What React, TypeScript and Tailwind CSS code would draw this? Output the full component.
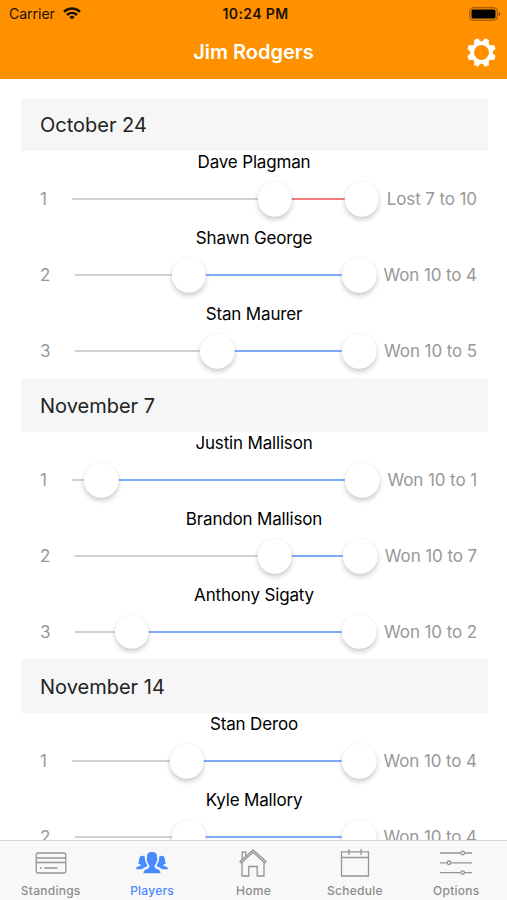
interface Match {
  opponent: string;
  score: number;
  result: string;
  lost?: boolean;
  slot: string;
}

interface Round {
  date: string;
  matches: Match[];
}

const rounds: Round[] = [
  {
    date: "October 24",
    matches: [
      { opponent: "Dave Plagman", score: 7, result: "Lost 7 to 10", lost: true, slot: "w-[115.5px]" },
      { opponent: "Shawn George", score: 4, result: "Won 10 to 4", slot: "w-[118px]" },
      { opponent: "Stan Maurer", score: 5, result: "Won 10 to 5", slot: "w-[118px]" },
    ],
  },
  {
    date: "November 7",
    matches: [
      { opponent: "Justin Mallison", score: 1, result: "Won 10 to 1", slot: "w-[115px]" },
      { opponent: "Brandon Mallison", score: 7, result: "Won 10 to 7", slot: "w-[117px]" },
      { opponent: "Anthony Sigaty", score: 2, result: "Won 10 to 2", slot: "w-[118px]" },
    ],
  },
  {
    date: "November 14",
    matches: [
      { opponent: "Stan Deroo", score: 4, result: "Won 10 to 4", slot: "w-[118px]" },
      { opponent: "Kyle Mallory", score: 4, result: "Won 10 to 4", slot: "w-[118px]" },
    ],
  },
];

function WifiIcon() {
  return (
    <svg className="ml-[8px] h-[13px] w-[18px]" viewBox="0 0 18 13" fill="none" stroke="#1c1000" strokeWidth="2.5">
      <path d="M1 4.8C5.5.5 12.5.5 17 4.8" />
      <path d="M4 8C7 5.2 11 5.2 14 8" />
      <path d="M9 12.6 6.4 9.9Q9 7.8 11.6 9.9Z" fill="#1c1000" stroke="none" />
    </svg>
  );
}

function BatteryIcon() {
  return (
    <svg className="h-[14px] w-[32px]" viewBox="0 0 32 14">
      <rect x="0.8" y="0.8" width="27.4" height="12.4" rx="3" fill="none" stroke="#8a4e00" strokeWidth="1" />
      <rect x="2.5" y="2.5" width="24" height="9" rx="1.5" fill="#000" />
      <path d="M29.7 4.8q1.600.8 1.600 2.200t-1.600 2.200z" fill="#8a4e00" />
    </svg>
  );
}

const teeth = [22.5, 67.5, 112.5, 157.5, 202.5, 247.5, 292.5, 337.5];

function GearIcon() {
  return (
    <svg className="h-[29px] w-[29px]" viewBox="-15 -15 30 30">
      <circle r="9.6" fill="none" stroke="#fff" strokeWidth="3.8" />
      {teeth.map((angle) => (
        <path
          key={angle}
          d="M-4.4-10.2Q-2.7-11.7-2.6-14.1Q-2.5-15 -1.6-15H1.6Q2.5-15 2.6-14.1Q2.7-11.7 4.4-10.2Z"
          fill="#fff"
          transform={`rotate(${angle})`}
        />
      ))}
    </svg>
  );
}

function CardIcon() {
  return (
    <svg className="h-8 w-8" viewBox="0 0 32 32" fill="none" stroke="#949494" strokeWidth="1.3">
      <rect x="1.2" y="6" width="29.6" height="20" rx="1.5" />
      <path d="M1.5 11h29M1.5 15.5h29M5 21h1.8M9.3 21h13.2" />
    </svg>
  );
}

function PeopleIcon() {
  return (
    <svg className="h-8 w-8" viewBox="0 0 32 32" fill="#488aff">
      <path d="M0 22.200c.2-2.700 2.500-2.400 4.400-3.400.7-.5.4-1.100.1-1.400l-2.600-.6c1.300-1 1-2.700 1.200-4.500.2-2.400 1.400-3.500 3.400-3.500 1 0 1.900.4 2.400 1-.2 2.400 0 3.700.9 5.200.4 1.500 1.200 2.600 1.700 3.300-.3 1.500-2.600 2-4 2.600-.7.3-1.100.7-1.500 1.300z" />
      <path d="M32 22.200c-.2-2.700-2.500-2.400-4.400-3.400-.7-.5-.4-1.100-.1-1.400l2.600-.6c-1.300-1-1-2.700-1.200-4.500-.2-2.400-1.400-3.500-3.400-3.500-1 0-1.900.4-2.400 1 .2 2.400 0 3.700-.9 5.200-.4 1.500-1.200 2.600-1.700 3.300.3 1.500 2.600 2 4 2.600.7.3 1.100.7 1.500 1.300z" />
      <path d="M7.500 26.300c.1-4.200 3.200-3.900 5.200-5.400.9-.7.7-2.200.5-2.800-1.200-1.100-1.500-2.500-1.700-3.700-1.100-.6-1.300-2.900-.4-3.200-.5-4.200 1-6.200 4.900-6.200s5.400 2 4.900 6.200c.9.300.7 2.600-.4 3.200-.2 1.200-.5 2.600-1.700 3.700-.2.600-.4 2.100.5 2.800 2 1.500 5.100 1.200 5.200 5.400z" />
    </svg>
  );
}

function HomeIcon() {
  return (
    <svg className="h-8 w-8" viewBox="0 0 32 32" fill="none" stroke="#949494" strokeWidth="1.3">
      <path d="M3 14.500 16 2.800l13 11.700-1.200 1.300L16 5.200 4.200 15.800zM5.200 12.200V5h3.500v4" />
      <path d="M5 15.300V29h6.800v-9.500h8.400V29H27V15.300" />
    </svg>
  );
}

function CalendarIcon() {
  return (
    <svg className="h-8 w-8" viewBox="0 0 32 32" fill="none" stroke="#949494" strokeWidth="1.3">
      <path d="M2.500 4.800h27V29h-27zM2.500 10.500h27M10 2v6M22 2v6" />
    </svg>
  );
}

function SlidersIcon() {
  return (
    <svg className="h-8 w-8" viewBox="0 0 32 32" fill="none" stroke="#949494" strokeWidth="1.3">
      <path d="M0 6h20.500M25 6h7M0 15.800h6.700M11.200 15.800H32M0 25.600h20.500M25 25.600h7" />
      <circle cx="22.7" cy="6" r="1.8" />
      <circle cx="9" cy="15.8" r="1.8" />
      <circle cx="22.7" cy="25.6" r="1.8" />
    </svg>
  );
}

const tabs = [
  { label: "Standings", icon: <CardIcon /> },
  { label: "Players", icon: <PeopleIcon />, active: true },
  { label: "Home", icon: <HomeIcon /> },
  { label: "Schedule", icon: <CalendarIcon /> },
  { label: "Options", icon: <SlidersIcon /> },
];

const knobClass =
  "absolute top-1/2 h-[34.5px] w-[34.5px] -translate-x-1/2 -translate-y-1/2 rounded-full bg-white shadow-[0_3px_5px_rgba(0,0,0,0.2),0_0_2px_rgba(0,0,0,0.05)]";

function ScoreRange({ score, lost }: { score: number; lost?: boolean }) {
  const left = `${score * 10}%`;
  return (
    <div className="relative h-[34px] min-w-0 flex-1">
      <div className="absolute top-[16px] h-[2px] w-full bg-[#d0d0d0]" />
      <div
        className={`absolute right-0 top-[16px] h-[2px] ${lost ? "bg-[#f47c7c]" : "bg-[#80abf8]"}`}
        style={{ left }}
      />
      <div className={knobClass} style={{ left }} />
      <div className={`${knobClass} left-full`} />
    </div>
  );
}

function MatchRow({ match, index }: { match: Match; index: number }) {
  return (
    <div className="h-[75.8px]">
      <div className="pr-px pt-[0.4px] text-center text-[17px] leading-[23px] tracking-[-0.17px] text-black">
        {match.opponent}
      </div>
      <div className="mt-[8px] flex items-center pl-[19px] pr-[11px] text-[17px] tracking-[-0.1px] text-[#989898]">
        <div className={`pt-[1.5px] ${index === 0 ? "w-[32px]" : "w-[35px]"}`}>{index + 1}</div>
        <ScoreRange score={match.score} lost={match.lost} />
        <div className={`pt-[1.5px] text-right ${match.slot}`}>{match.result}</div>
      </div>
    </div>
  );
}

export default function App() {
  return (
    <div className="flex h-[900px] w-[507px] flex-col overflow-hidden bg-white font-['Inter','Liberation_Sans',sans-serif]">
      <header className="h-[79px] shrink-0 bg-[#ff9100]">
        <div className="grid h-[27px] grid-cols-3 items-center pl-[9px] pr-[6px] text-[14px] text-[#1c1000]">
          <div className="flex items-center">
            Carrier
            <WifiIcon />
          </div>
          <div className="pl-px text-center font-semibold tracking-[0.4px]">10:24 PM</div>
          <div className="flex justify-end">
            <BatteryIcon />
          </div>
        </div>
        <div className="grid h-[50px] grid-cols-[1fr_auto_1fr] items-center px-[11px]">
          <h1 className="col-start-2 text-[20px] font-semibold text-white">Jim Rodgers</h1>
          <button className="justify-self-end">
            <GearIcon />
          </button>
        </div>
      </header>

      <main className="min-h-0 flex-1 overflow-hidden pl-[21px] pr-[19px] pt-[18.6px]">
        {rounds.map((round) => (
          <section key={round.date}>
            <h2 className="flex h-[53.5px] items-center bg-[#f6f6f6] pl-[19px] pt-px text-[20px] text-[#222]">
              {round.date}
            </h2>
            {round.matches.map((match, i) => (
              <MatchRow key={match.opponent} match={match} index={i} />
            ))}
          </section>
        ))}
      </main>

      <nav className="z-10 grid h-[60px] shrink-0 grid-cols-5 border-t border-[#d4d4d4] bg-[#f8f8f8]">
        {tabs.map((tab) => (
          <button
            key={tab.label}
            className={`flex flex-col items-center pt-[6px] text-[12px] font-medium tracking-[0.25px] ${
              tab.active ? "text-[#488aff]" : "text-[#8c8c8c]"
            }`}
          >
            {tab.icon}
            <span className="mt-[4px] leading-[16px]">{tab.label}</span>
          </button>
        ))}
      </nav>
    </div>
  );
}
